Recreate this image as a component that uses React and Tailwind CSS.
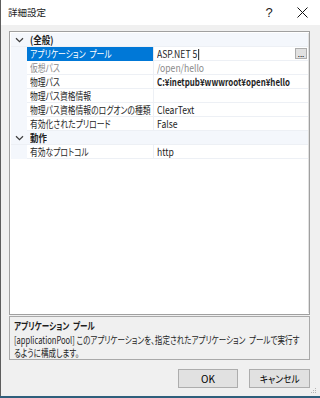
import React from "react";

const rows = [
  { cat: true, label: "(全般)" },
  { name: "アプリケーション\u2002プール", value: "ASP.NET 5", selected: true },
  { name: "仮想パス", value: "/open/hello", muted: true },
  { name: "物理パス", value: "C:¥inetpub¥wwwroot¥open¥hello", bold: true },
  { name: "物理パス資格情報", value: "" },
  { name: "物理パス資格情報のログオンの種類", value: "ClearText" },
  { name: "有効化されたプリロード", value: "False" },
  { cat: true, label: "動作" },
  { name: "有効なプロトコル", value: "http" },
];

// Meiryo UI is much narrower than the installed CJK font, so text is condensed horizontally
const Narrow = ({ className = "scale-x-[0.8]", children }) => (
  <span className={"inline-block origin-left whitespace-nowrap " + className}>{children}</span>
);

const Chevron = () => (
  <svg width="9" height="6" viewBox="0 0 9 6" className="block">
    <path d="M1 1.2 L4.5 4.6 L8 1.2" fill="none" stroke="#3c3c3c" strokeWidth="1.2" />
  </svg>
);

function Row({ r }) {
  if (r.cat) {
    return (
      <div className="flex h-[14px] shrink-0 overflow-hidden bg-[#f4f7fc] border-b border-[#edf0f5]">
        <div className="w-[16px] shrink-0 flex items-center justify-center">
          <Chevron />
        </div>
        <div className="pl-[3px] font-bold leading-[13px] text-[#1e1e1e]">
          <Narrow className="scale-x-[0.85]">{r.label}</Narrow>
        </div>
      </div>
    );
  }
  return (
    <div className="flex h-[14px] shrink-0 overflow-hidden">
      <div className="w-[16px] shrink-0 bg-[#f4f7fc]" />
      <div
        className={
          "w-[127px] shrink-0 overflow-hidden whitespace-nowrap pl-[3px] leading-[13px] border-r border-[#e4e7ec] " +
          (r.selected
            ? "bg-[#0078d7] text-white"
            : r.muted
            ? "text-[#8a8a8a] border-b border-[#edf0f5]"
            : "text-[#1e1e1e] border-b border-[#edf0f5]")
        }
      >
        <Narrow className="scale-x-[0.78]">{r.name}</Narrow>
      </div>
      <div
        className={
          "flex-1 min-w-0 overflow-hidden flex items-center pl-[3px] text-[10px] leading-[13px] whitespace-nowrap border-b border-[#edf0f5] " +
          (r.muted ? "text-[#8a8a8a]" : "text-[#1e1e1e]") +
          (r.bold ? " font-bold" : "")
        }
      >
        <Narrow className={r.bold ? "scale-x-[0.79]" : "scale-x-[0.86]"}>
          {r.value}
          {r.selected && <span className="inline-block align-middle ml-[1px] w-px h-[11px] bg-black" />}
        </Narrow>
        {r.selected && (
          <div className="ml-auto mr-[1px] w-[12px] h-[11px] shrink-0 bg-[#e1e1e1] border border-[#adadad] flex items-end justify-center text-[8px] leading-[8px] text-black">
            ...
          </div>
        )}
      </div>
    </div>
  );
}

export default function App() {
  return (
    <div className="w-[320px] h-[398px] flex flex-col bg-[#2f5f7c] text-[10px] font-['Noto_Sans_CJK_JP','Noto_Sans',sans-serif] [font-feature-settings:'palt']">
      <div className="flex-1 flex flex-col border-l border-[#5d5d5d] mb-[2px]">
        {/* title bar */}
        <div className="h-[25px] shrink-0 bg-white flex items-center pl-[7px] text-[9.5px] text-[#222]">
          <span>詳細設定</span>
          <span className="ml-auto w-[30px] text-center text-[13px] font-['Liberation_Sans',sans-serif]">?</span>
          <span className="w-[36px] flex justify-center">
            <svg width="11" height="11" viewBox="0 0 11 11">
              <path d="M0.5 0.5 L10.5 10.5 M10.5 0.5 L0.5 10.5" stroke="#111" strokeWidth="1" />
            </svg>
          </span>
        </div>

        {/* body */}
        <div className="flex-1 bg-[#f0f0f0] flex flex-col pl-[8px] pr-[10px] pt-[6px]">
          <div className="h-[284px] shrink-0 bg-white border border-[#a0a0a0] p-[1px] pr-0">
            <div className="h-full border-r border-[#e1e1e1] bg-white flex flex-col">
              {rows.map((r, i) => (
                <Row key={i} r={r} />
              ))}
            </div>
          </div>

          <div className="mt-[1px] h-[44px] shrink-0 border border-[#a9a9a9] bg-[#f0f0f0] px-[4px] pt-[2px] text-[#1e1e1e] leading-[13px] overflow-hidden">
            <div className="font-bold">
              <Narrow className="scale-x-[0.76]">アプリケーション{"\u2002"}プール</Narrow>
            </div>
            <div className="pt-[1px]">
              <Narrow className="scale-x-[0.755]">
                [applicationPool] このアプリケーションを、指定されたアプリケーション{"\u2002"}プールで実行す
              </Narrow>
            </div>
            <div>
              <Narrow className="scale-x-[0.755]">るように構成します。</Narrow>
            </div>
          </div>

          <div className="flex justify-end gap-[11px] mt-[9px] shrink-0">
            <button className="w-[60px] h-[19px] bg-[#e1e1e1] border border-[#adadad] text-[10px] leading-[17px] text-black">
              OK
            </button>
            <button className="w-[61px] h-[19px] bg-[#e1e1e1] border border-[#adadad] text-[10px] leading-[17px] text-black">
              <span className="inline-block scale-x-[0.88]">キャンセル</span>
            </button>
          </div>
          <div className="flex-1 flex justify-end items-end pb-[2px] -mr-[7px]">
            <svg width="6" height="6" viewBox="0 0 6 6">
              <rect x="4" y="0" width="1" height="1" fill="#b5b5b5" />
              <rect x="2" y="2" width="1" height="1" fill="#b5b5b5" />
              <rect x="4" y="2" width="1" height="1" fill="#b5b5b5" />
              <rect x="0" y="4" width="1" height="1" fill="#b5b5b5" />
              <rect x="2" y="4" width="1" height="1" fill="#b5b5b5" />
              <rect x="4" y="4" width="1" height="1" fill="#b5b5b5" />
            </svg>
          </div>
        </div>
      </div>
    </div>
  );
}
